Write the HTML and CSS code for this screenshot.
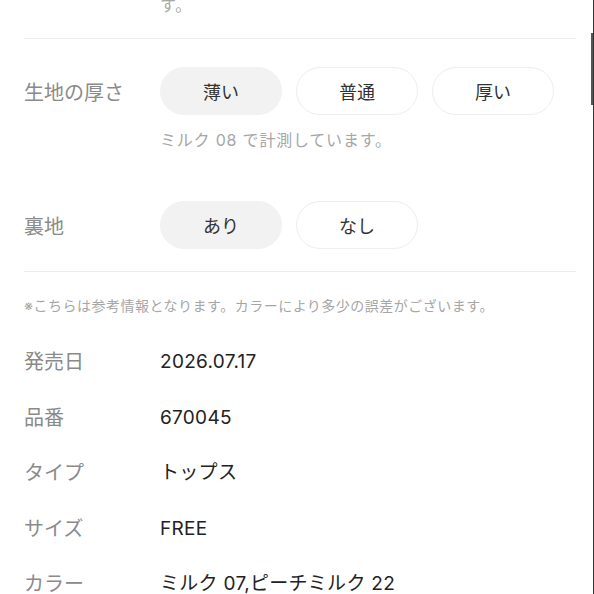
FILE: index.html
```html
<!DOCTYPE html>
<html lang="ja">
<head>
  <meta charset="UTF-8">
  <meta name="viewport" content="width=device-width, initial-scale=1.0">
  <title>商品詳細</title>
  <link rel="stylesheet" href="styles.css">
</head>
<body>
  <div class="page">
    <div class="detail">
      <p class="note note-top">ご使用いただけます。季節によって素材感が異なる場合がありま<br>す。</p>

      <hr class="divider divider-top">

      <div class="option-row">
        <span class="label">生地の厚さ</span>
        <div class="choices">
          <button class="chip active">薄い</button>
          <button class="chip">普通</button>
          <button class="chip">厚い</button>
        </div>
      </div>
      <p class="note note-measure">ミルク 08 で計測しています。</p>

      <div class="option-row option-lining">
        <span class="label">裏地</span>
        <div class="choices">
          <button class="chip active">あり</button>
          <button class="chip">なし</button>
        </div>
      </div>

      <hr class="divider divider-bottom">

      <p class="caution">※こちらは参考情報となります。カラーにより多少の誤差がございます。</p>

      <dl class="specs">
        <div class="spec-row"><dt>発売日</dt><dd>2026.07.17</dd></div>
        <div class="spec-row"><dt>品番</dt><dd>670045</dd></div>
        <div class="spec-row"><dt>タイプ</dt><dd>トップス</dd></div>
        <div class="spec-row"><dt>サイズ</dt><dd>FREE</dd></div>
        <div class="spec-row"><dt>カラー</dt><dd>ミルク 07,ピーチミルク 22</dd></div>
      </dl>
    </div>
    <div class="scrollbar"><div class="thumb"></div></div>
  </div>
</body>
</html>
```

FILE: styles.css
```css
html, body {
  margin: 0;
  height: 100%;
  overflow: hidden;
  background: #fff;
}

body {
  font-family: Inter, "Noto Sans CJK JP", sans-serif;
  color: #222;
}

.page {
  display: flex;
  height: 100%;
}

.detail {
  flex: 1;
  padding: 0 14px 0 24px;
  overflow: hidden;
}

.scrollbar {
  width: 3px;
  border-right: 1px solid #333;
  position: relative;
}

.thumb {
  position: absolute;
  top: 33px;
  right: 0;
  width: 2px;
  height: 72px;
  background: #555;
}

.note {
  margin: 0;
  padding-left: 136px;
  font-size: 16px;
  line-height: 22px;
  color: #a6a6a6;
  letter-spacing: 0.8px;
}

.note-top {
  margin-top: -28px;
  white-space: nowrap;
}

.divider {
  border: none;
  height: 1px;
  background: #ededed;
  margin: 0;
}

.divider-top {
  margin-top: 22px;
}

.option-row {
  display: flex;
  align-items: center;
  margin-top: 28px;
}

.option-lining {
  margin-top: 50px;
}

.label {
  width: 136px;
  flex-shrink: 0;
  font-size: 20px;
  color: #8a8a8a;
  padding-top: 1px;
}

.choices {
  display: flex;
  gap: 14px;
}

.chip {
  width: 122px;
  height: 48px;
  border-radius: 24px;
  border: 1px solid #eeeeee;
  background: #fff;
  font-family: inherit;
  font-size: 18px;
  color: #333;
  padding: 0;
}

.chip.active {
  background: #f2f2f2;
  border-color: #f2f2f2;
}

.note-measure {
  margin-top: 14px;
}

.divider-bottom {
  margin-top: 22px;
}

.caution {
  margin: 24px 0 0;
  font-size: 14px;
  line-height: 20px;
  color: #a6a6a6;
  letter-spacing: 0.5px;
}

.specs {
  margin: 34px 0 0;
}

.spec-row {
  display: flex;
  height: 24px;
  line-height: 24px;
  margin-bottom: 31.5px;
  font-size: 19px;
  letter-spacing: 0.3px;
}

.spec-row dt {
  width: 136px;
  flex-shrink: 0;
  font-size: 20px;
  letter-spacing: 0;
  color: #8a8a8a;
}

.spec-row dd {
  margin: 0;
  color: #222;
}
```
